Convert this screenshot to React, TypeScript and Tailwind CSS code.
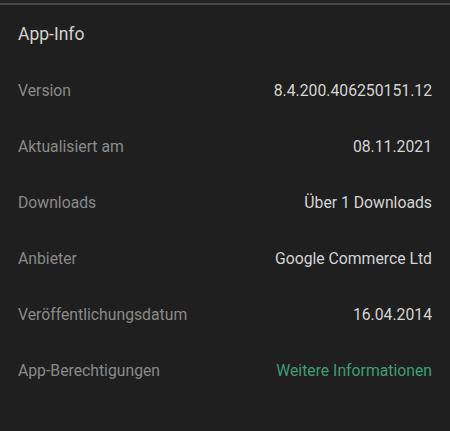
const rows: { label: string; value: string; link?: boolean }[] = [
  { label: "Version", value: "8.4.200.406250151.12" },
  { label: "Aktualisiert am", value: "08.11.2021" },
  { label: "Downloads", value: "Über 1 Downloads" },
  { label: "Anbieter", value: "Google Commerce Ltd" },
  { label: "Veröffentlichungsdatum", value: "16.04.2014" },
  { label: "App-Berechtigungen", value: "Weitere Informationen", link: true },
];

export default function App() {
  return (
    <div className="h-[431px] w-[450px] overflow-hidden bg-[#1f1f1f] font-['Roboto',sans-serif]">
      <div className="h-[3px] bg-[#232323]" />
      <div className="h-[2px] bg-[#474747]" />
      <div className="flex h-[58px] items-center px-[18px] text-[17.5px] text-[#d2d2d2]">App-Info</div>
      {rows.map((r) => (
        <div key={r.label} className="flex h-[56px] items-center justify-between px-[18px] text-[15.75px]">
          <span className="text-[#8a8a8a]">{r.label}</span>
          <span className={r.link ? "text-[#3f9e74]" : "text-[#d4d4d4]"}>{r.value}</span>
        </div>
      ))}
    </div>
  );
}
